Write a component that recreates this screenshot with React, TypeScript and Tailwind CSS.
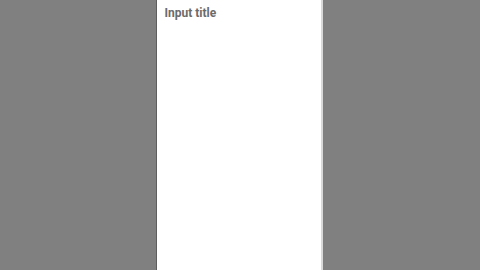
export default function App() {
  return (
    <div className="flex h-[270px] w-[480px] justify-center bg-[#808080]">
      <div className="ml-[-2px] flex h-full w-[167px] flex-col border-l border-[#5e5e5e] border-r-2 border-r-[#d9d9d9] bg-white px-2 pt-[5px]">
        <h1 className="text-[12px] font-bold leading-[16px] text-[#6b6b6b] [font-family:Roboto,sans-serif]">
          Input title
        </h1>
      </div>
    </div>
  );
}
